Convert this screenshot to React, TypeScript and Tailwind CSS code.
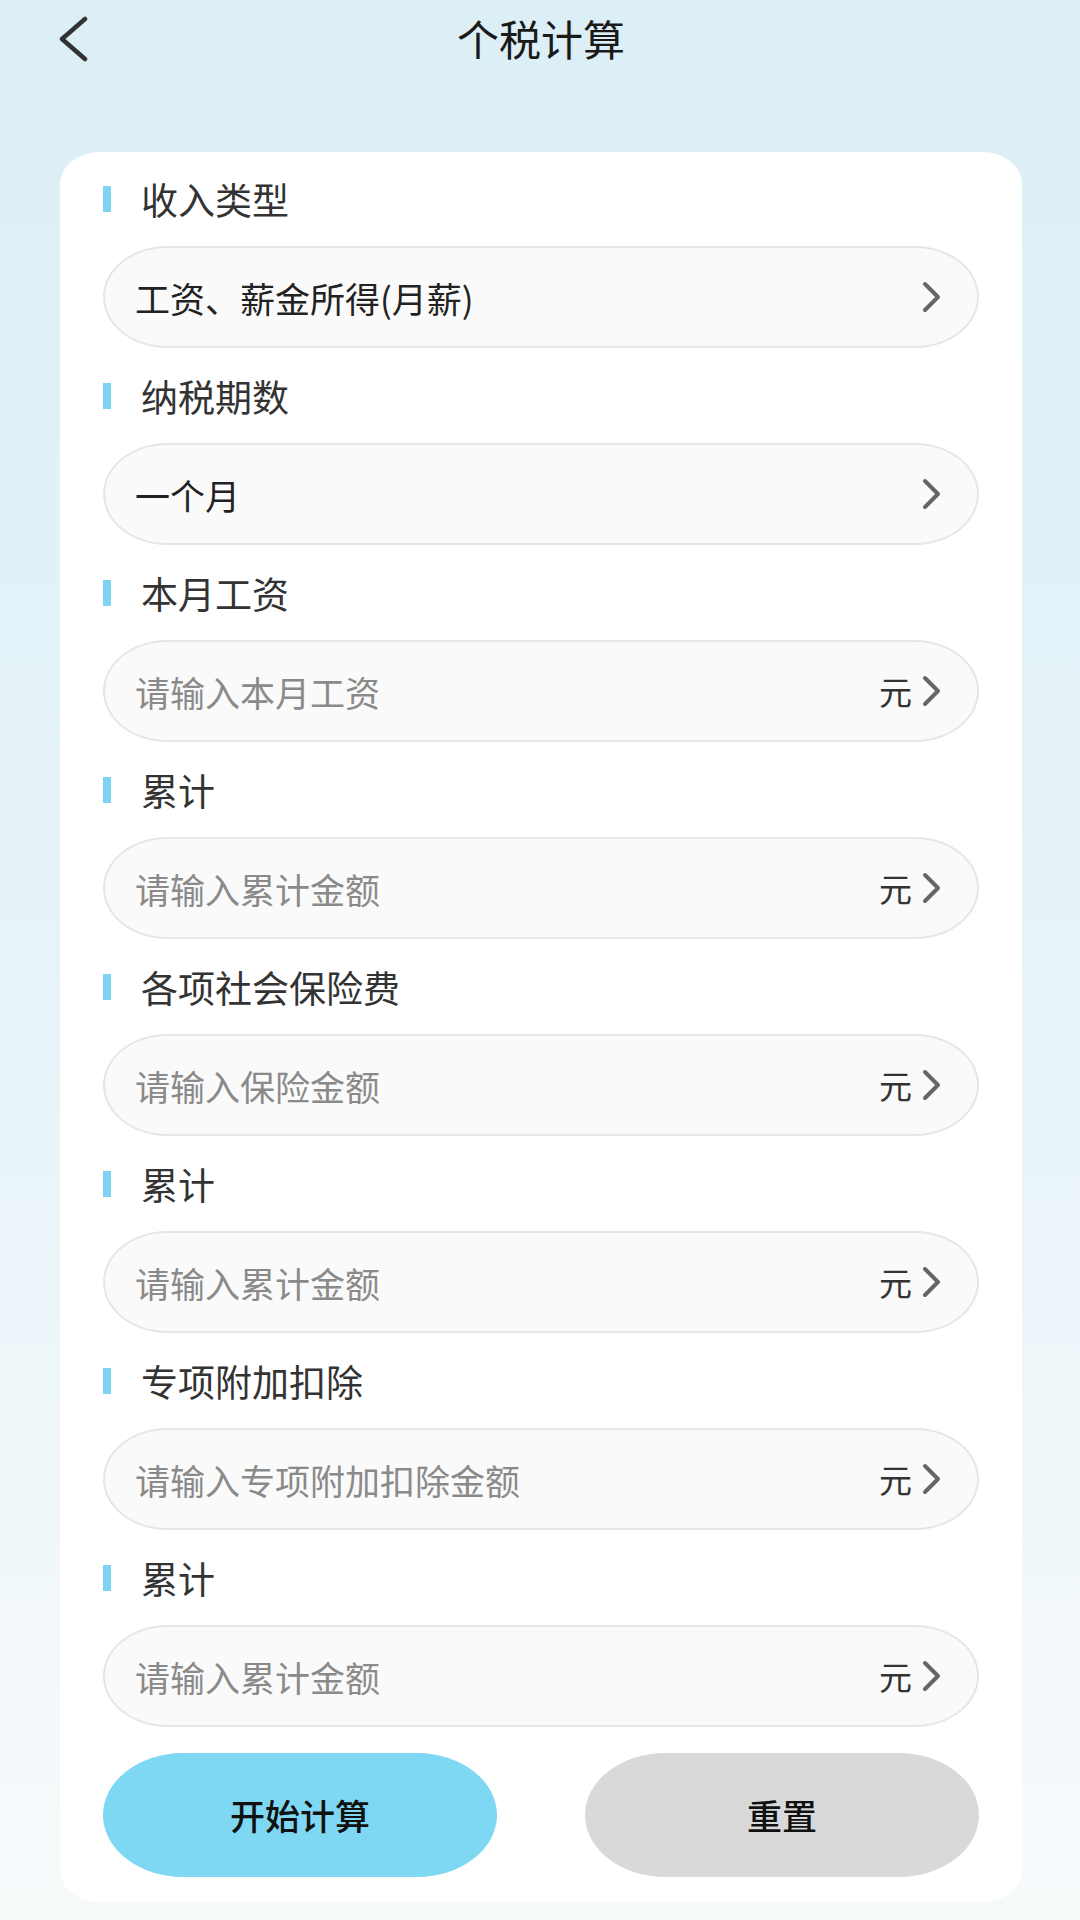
import React from "react";

type Field = { label: string; value?: string; placeholder?: string; unit?: boolean };

const fields: Field[] = [
  { label: "收入类型", value: "工资、薪金所得(月薪)" },
  { label: "纳税期数", value: "一个月" },
  { label: "本月工资", placeholder: "请输入本月工资", unit: true },
  { label: "累计", placeholder: "请输入累计金额", unit: true },
  { label: "各项社会保险费", placeholder: "请输入保险金额", unit: true },
  { label: "累计", placeholder: "请输入累计金额", unit: true },
  { label: "专项附加扣除", placeholder: "请输入专项附加扣除金额", unit: true },
  { label: "累计", placeholder: "请输入累计金额", unit: true },
];

function ChevronRight() {
  return (
    <svg width="20" height="32" viewBox="0 0 20 32" fill="none">
      <polyline points="3,3 16,16 3,29" stroke="#666666" strokeWidth="4" strokeLinecap="round" strokeLinejoin="round" />
    </svg>
  );
}

function ChevronLeft() {
  return (
    <svg width="30" height="46" viewBox="0 0 30 46" fill="none">
      <polyline points="27,3 4,23 27,43" stroke="#333333" strokeWidth="4.5" strokeLinecap="round" strokeLinejoin="round" />
    </svg>
  );
}

export default function App() {
  return (
    <div className="w-[1080px] min-h-[1920px] bg-gradient-to-b from-[#dceff6] via-[#e6f3f8] to-[#f7fafb] font-['Noto_Sans_CJK_SC','Noto_Sans',sans-serif]">
      <div className="relative h-[76px] flex items-center justify-center">
        <div className="absolute left-[58px] top-[16px]">
          <ChevronLeft />
        </div>
        <div className="text-[42px] leading-none text-[#1a1a1a] pl-[2px]">个税计算</div>
      </div>
      <div className="ml-[60px] mt-[76px] w-[962px] bg-white rounded-[40px/32px] px-[43px] pt-[17px] pb-[25px]">
        <div className="flex flex-col gap-[18px]">
          {fields.map((f, i) => (
            <div key={i} className="flex flex-col">
              <div className="h-[60px] flex items-center">
                <div className="w-[8px] h-[26px] bg-[#7fd5f1]" />
                <div className="ml-[30px] text-[37px] leading-none text-[#333333]">{f.label}</div>
              </div>
              <div className="mt-[17px] h-[102px] flex items-center justify-between rounded-[64px/51px] border-2 border-[#e6e6e6] bg-[#fafafa] pl-[30px] pr-[35px]">
                {f.value ? (
                  <span className="text-[35px] leading-none text-[#222222]">{f.value}</span>
                ) : (
                  <span className="text-[35px] leading-none text-[#8a8a8a]">{f.placeholder}</span>
                )}
                <div className="flex items-center gap-[10px]">
                  {f.unit && <span className="text-[33px] leading-none text-[#333333]">元</span>}
                  <ChevronRight />
                </div>
              </div>
            </div>
          ))}
        </div>
        <div className="mt-[26px] flex justify-between">
          <button className="w-[394px] h-[124px] rounded-[80px/62px] bg-[#7fd8f3] text-[35px] font-medium text-[#111111]">
            开始计算
          </button>
          <button className="w-[394px] h-[124px] rounded-[80px/62px] bg-[#d9d9d9] text-[35px] font-medium text-[#111111]">
            重置
          </button>
        </div>
      </div>
    </div>
  );
}
